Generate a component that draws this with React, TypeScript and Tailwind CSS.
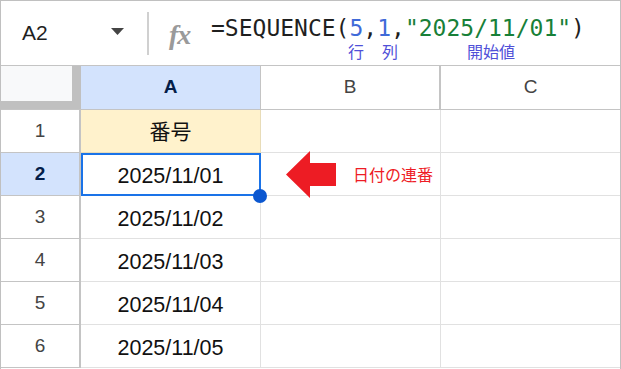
const rows = ['2025/11/01', '2025/11/02', '2025/11/03', '2025/11/04', '2025/11/05']

function RowHeader({ n, active }: { n: number; active?: boolean }) {
  return (
    <div
      className={
        'w-[80px] shrink-0 flex items-center justify-center border-b border-r-2 border-[#c4c4c4] text-[19px] ' +
        (active ? 'bg-[#d3e3fd] text-[#041e49] font-bold' : 'bg-white text-[#444]')
      }
    >
      {n}
    </div>
  )
}

function Arrow() {
  return (
    <svg width="50" height="47" viewBox="0 0 50 47" className="shrink-0 overflow-visible">
      <polygon points="0,23.5 24,0 24,12 50,12 50,35 24,35 24,47" fill="#ed1c24" />
    </svg>
  )
}

export default function App() {
  return (
    <div className="w-[621px] h-[369px] overflow-hidden bg-white border-l border-t border-r border-[#c0c0c0] font-['Liberation_Sans',Arial,sans-serif] text-[#222]">
      {/* formula bar */}
      <div className="h-[65px] flex items-center border-b border-[#c4c4c4]">
        <div className="w-[146px] h-full flex items-center pl-[21px] pr-[23px]">
          <span className="text-[21px] text-[#1f1f1f]">A2</span>
          <svg width="13" height="7" viewBox="0 0 13 7" className="ml-auto mb-[3px]">
            <polygon points="0,0 13,0 6.5,7" fill="#444" />
          </svg>
        </div>
        <div className="w-[2px] h-[43px] bg-[#d0d0d0]" />
        <span className="ml-[20px] mt-[4px] w-[26px] text-[28px] leading-none italic font-bold text-[#9a9a9a] font-['Liberation_Serif',serif] tracking-[-1px]">
          fx
        </span>
        <div className="ml-[16px] self-start flex flex-col pt-[16px]">
          <div className="text-[23px] leading-[22px] font-['DejaVu_Sans_Mono',monospace] text-[#1f1f1f] whitespace-pre">
            =SEQUENCE(<span className="text-[#3f6ad8]">5</span>,<span className="text-[#3f6ad8]">1</span>,
            <span className="text-[#188038]">"2025/11/01"</span>)
          </div>
          <div className="flex text-[16px] leading-[18px] mt-[3px] text-[#5050d8] font-['Noto_Sans_CJK_JP',sans-serif]">
            <span className="ml-[137px]">行</span>
            <span className="ml-[18px]">列</span>
            <span className="ml-[69px]">開始値</span>
          </div>
        </div>
      </div>

      {/* column headers */}
      <div className="flex h-[44px] border-b border-[#c4c4c4]">
        <div className="w-[80px] shrink-0 bg-[#c0c0c0]">
          <div className="w-[71px] h-[35px] bg-[#f8f9fa]" />
        </div>
        <div className="w-[180px] shrink-0 flex items-center justify-center bg-[#d3e3fd] border-r border-[#c4c4c4] text-[19px] font-bold text-[#041e49]">
          A
        </div>
        <div className="w-[180px] shrink-0 flex items-center justify-center border-r-2 border-[#c4c4c4] text-[19px] text-[#444]">
          B
        </div>
        <div className="flex-1 flex items-center justify-center text-[19px] text-[#444]">C</div>
      </div>

      {/* row 1 */}
      <div className="flex h-[43px]">
        <RowHeader n={1} />
        <div className="w-[180px] shrink-0 flex items-center justify-center bg-[#fff2cc] border-b border-r border-[#e8dcb8] text-[21px] text-[#111] font-['Noto_Sans_CJK_JP',sans-serif]">
          番号
        </div>
        <div className="w-[180px] shrink-0 border-b border-r border-[#e1e1e1]" />
        <div className="flex-1 border-b border-[#e1e1e1]" />
      </div>

      {rows.map((d, i) => (
        <div key={d} className="flex h-[43px]">
          <RowHeader n={i + 2} active={i === 0} />
          <div className="relative w-[180px] shrink-0 flex items-center justify-center pt-[4px] border-b border-r border-[#e1e1e1] text-[21.5px] text-[#111]">
            {d}
            {i === 0 && (
              <div className="absolute left-0 top-0 w-[180px] h-[43px] border-2 border-[#1a73e8] z-10">
                <div className="absolute -right-[8px] -bottom-[9px] w-[14px] h-[14px] rounded-full bg-[#0b57d0]" />
              </div>
            )}
          </div>
          <div className="w-[180px] shrink-0 flex items-center border-b border-r border-[#e1e1e1]">
            {i === 0 && (
              <>
                <div className="ml-[25px] h-[42px] flex items-center">
                  <Arrow />
                </div>
                <span className="ml-[17px] text-[16px] text-[#ee1c25] font-['Noto_Sans_CJK_JP',sans-serif]">
                  日付の連番
                </span>
              </>
            )}
          </div>
          <div className="flex-1 border-b border-[#e1e1e1]" />
        </div>
      ))}
    </div>
  )
}
